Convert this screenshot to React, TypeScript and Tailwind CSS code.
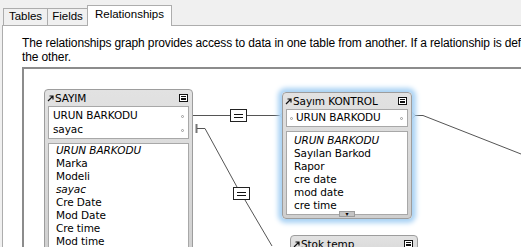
import React from "react";

type Field = { label: string; italic?: boolean };

function CornerArrow() {
  return (
    <svg width="7" height="7" viewBox="0 0 7 7" className="shrink-0">
      <path d="M1 6 L6 1 M2.5 1 H6 V4.5" stroke="#111" strokeWidth="1.2" fill="none" />
    </svg>
  );
}

function CollapseIcon() {
  return (
    <svg width="9" height="8" viewBox="0 0 9 8" className="shrink-0">
      <rect x="0.5" y="0.5" width="8" height="7" fill="#fff" stroke="#111" />
      <rect x="2" y="2" width="5" height="1" fill="#111" />
      <rect x="2" y="4" width="5" height="2" fill="#111" />
    </svg>
  );
}

function Dot() {
  return <span className="inline-block w-[3px] h-[3px] rounded-full border border-[#9a9a9a] shrink-0" />;
}

function Table({
  title,
  keys,
  fields,
  className,
  leftDots,
  fieldsPad,
  footer,
  keyPad,
}: {
  title: string;
  keys: string[];
  fields: Field[];
  className: string;
  leftDots?: boolean;
  fieldsPad?: string;
  footer?: boolean;
  keyPad?: string;
}) {
  return (
    <div
      className={`absolute flex flex-col rounded-[4px] border border-[#9d9d9d] bg-gradient-to-b from-[#e2e2e2] to-[#cfcfcf] font-['DejaVu_Sans',Verdana,sans-serif] text-[10.5px] tracking-[-0.1px] text-[#000] ${className}`}
    >
      {/* header */}
      <div className="h-[16px] flex items-center pl-[2px] pr-[4px] gap-[1px]">
        <CornerArrow />
        <span className="flex-1 leading-none">{title}</span>
        <CollapseIcon />
      </div>

      {keys.length > 0 && (
        <div className={`mx-[3px] bg-white border border-[#a8a8a8] ${keyPad ?? "py-px"}`}>
          {keys.map((k) => (
            <div key={k} className="h-[14px] flex items-center gap-[2px] pl-[3px] pr-[4px]">
              {leftDots && <Dot />}
              <span className="flex-1 pl-[1px]">{k}</span>
              <Dot />
            </div>
          ))}
        </div>
      )}

      {fields.length > 0 && (
        <div className={`mx-[3px] mt-[4px] bg-white border border-[#a8a8a8] ${fieldsPad ?? ""}`}>
          {fields.map((f, i) => (
            <div key={i} className={`h-[13px] flex items-center pl-[7px] ${f.italic ? "italic" : ""}`}>
              {f.label}
            </div>
          ))}
        </div>
      )}

      {footer && (
        <div className="h-[3px] relative flex justify-center">
          <div className="absolute -top-[4px] w-[16px] h-[6px] bg-[#c4c4c4] border border-[#9d9d9d] flex items-center justify-center text-[6px] leading-none">
            ▾
          </div>
        </div>
      )}
    </div>
  );
}

function EqualsBox({ x, y }: { x: number; y: number }) {
  return (
    <g>
      <rect x={x + 0.5} y={y + 0.5} width="16" height="12" fill="#fff" stroke="#222" />
      <line x1={x + 4} y1={y + 5.5} x2={x + 13} y2={y + 5.5} stroke="#111" />
      <line x1={x + 4} y1={y + 8.5} x2={x + 13} y2={y + 8.5} stroke="#111" />
    </g>
  );
}

export default function App() {
  return (
    <div className="w-[521px] h-[247px] overflow-hidden bg-[#f0f0f0] flex flex-col font-['Liberation_Sans',Arial,sans-serif] text-[#000]">
      {/* tabs */}
      <div className="h-[25px] flex items-end pl-[3px] shrink-0">
        <div className="h-[17px] w-[45px] border border-b-0 border-[#adadad] bg-[#f0f0f0] flex items-center justify-center text-[11.5px]">
          Tables
        </div>
        <div className="h-[17px] w-[40px] border border-l-0 border-b-0 border-[#adadad] bg-[#f0f0f0] flex items-center justify-center text-[11.5px]">
          Fields
        </div>
        <div className="relative z-10 -mb-px -ml-px h-[21px] w-[85px] border border-b-0 border-[#adadad] bg-white flex items-center justify-center pb-[2px] text-[11.5px]">
          Relationships
        </div>
      </div>

      {/* panel */}
      <div className="flex-1 ml-[2px] bg-white border-l border-t border-[#adadad] flex flex-col pl-[19px] pt-[10px] min-h-0">
        <div className="text-[12px] leading-[14px] tracking-[-0.12px] whitespace-nowrap">
          <div>The relationships graph provides access to data in one table from another. If a relationship is defined between two tables</div>
          <div>the other.</div>
        </div>

        {/* graph canvas */}
        <div className="relative mt-[3px] flex-1 border-l-2 border-t-2 border-l-[#8c8c8c] border-t-[#8c8c8c] bg-white overflow-hidden">
          <div className="absolute left-[-24px] top-[-70px] w-[521px] h-[247px]">
            <svg width="521" height="247" className="absolute left-0 top-0">
              {/* SAYIM.URUN BARKODU -> Sayım KONTROL */}
              <line x1="193" y1="116.5" x2="230" y2="116.5" stroke="#555" />
              <line x1="246" y1="116.5" x2="280" y2="116.5" stroke="#555" />
              <polyline points="284,112 280,116.5 284,121" fill="none" stroke="#8aa0b4" />
              <EqualsBox x={230} y={110} />

              {/* SAYIM.sayac -> Stok temp */}
              <line x1="196.5" y1="125" x2="196.5" y2="134" stroke="#777" strokeWidth="2" />
              <line x1="197" y1="129.5" x2="205" y2="129.5" stroke="#555" />
              <line x1="205" y1="129.5" x2="237" y2="188" stroke="#555" />
              <line x1="245" y1="201" x2="272" y2="247" stroke="#555" />
              <EqualsBox x={233} y={188} />

              {/* Sayım KONTROL -> right */}
              <polyline points="411,112 415,116.5 411,121" fill="none" stroke="#8aa0b4" />
              <line x1="415" y1="116.5" x2="423" y2="116.5" stroke="#555" />
              <line x1="423" y1="116.5" x2="521" y2="155" stroke="#555" />
            </svg>

            <Table
              title="SAYIM"
              className="left-[44px] top-[90px] w-[149px]"
              keyPad="pt-[2px] pb-[1px]"
              keys={["URUN BARKODU", "sayac"]}
              fields={[
                { label: "URUN BARKODU", italic: true },
                { label: "Marka" },
                { label: "Modeli" },
                { label: "sayac", italic: true },
                { label: "Cre Date" },
                { label: "Mod Date" },
                { label: "Cre time" },
                { label: "Mod time" },
                { label: "Sayim" },
              ]}
            />

            <Table
              title="Sayım KONTROL"
              className="left-[282px] top-[93px] w-[130px] shadow-[0_0_5px_4px_#a9d2f4]"
              keys={["URUN BARKODU"]}
              leftDots
              fieldsPad="pt-[2px] pb-[2px] mt-[3px]"
              footer
              fields={[
                { label: "URUN BARKODU", italic: true },
                { label: "Sayılan Barkod" },
                { label: "Rapor" },
                { label: "cre date" },
                { label: "mod date" },
                { label: "cre time" },
              ]}
            />

            <Table
              title="Stok temp"
              className="left-[290px] top-[236px] w-[128px]"
              keys={["URUN BARKODU"]}
              fields={[]}
            />
          </div>
        </div>
      </div>
    </div>
  );
}
